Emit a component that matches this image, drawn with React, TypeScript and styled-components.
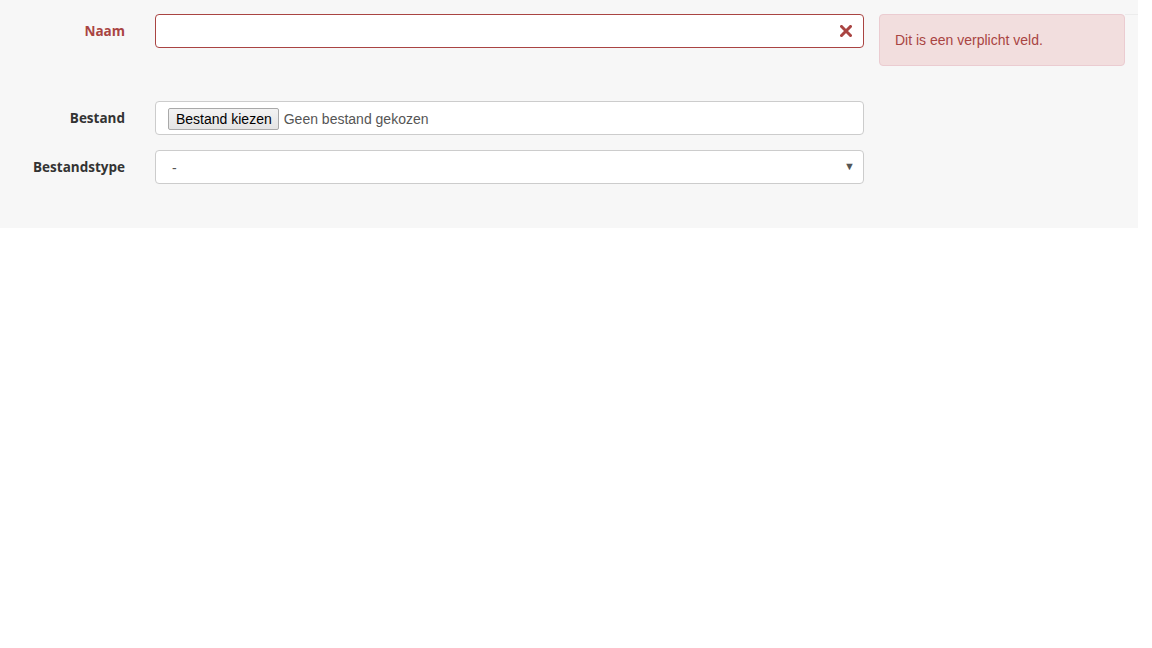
import styled, { createGlobalStyle } from "styled-components"

const GlobalStyle = createGlobalStyle`
	body {
		margin: 0;
		background: #fff;
		font-family: "Liberation Sans", Arial, sans-serif;
	}
`

const Panel = styled.div`
	width: 1138px;
	background: #f7f7f7;
	padding: 14px 0 44px;
	box-sizing: border-box;
`

const Row = styled.div<{ $gap: number }>`
	display: flex;
	align-items: flex-start;
	margin-bottom: ${(p) => p.$gap}px;
	&:last-child {
		margin-bottom: 0;
	}
`

const Label = styled.label<{ $error?: boolean }>`
	width: 125px;
	height: 34px;
	line-height: 34px;
	text-align: right;
	font-family: "Open Sans", sans-serif;
	font-weight: 700;
	font-size: 13.5px;
	color: ${(p) => (p.$error ? "#a94442" : "#333")};
	margin-right: 30px;
	flex-shrink: 0;
`

const Field = styled.div<{ $error?: boolean }>`
	position: relative;
	width: 709px;
	height: 34px;
	box-sizing: border-box;
	background: #fff;
	border: 1px solid ${(p) => (p.$error ? "#a94442" : "#ccc")};
	border-radius: 4px;
	display: flex;
	align-items: center;
	padding: 2px 12px 0;
	font-size: 14px;
	color: #555;
	flex-shrink: 0;
`

const ClearIcon = styled.svg`
	position: absolute;
	right: 11px;
	top: 10px;
`

const FileButton = styled.span`
	display: inline-block;
	height: 22px;
	line-height: 20px;
	box-sizing: border-box;
	padding: 0 6px 0 7px;
	border: 1px solid #a9a9a9;
	border-radius: 2px;
	background: linear-gradient(#f3f3f3, #e4e4e4);
	color: #000;
	font-size: 14px;
	margin-right: 5px;
`

const SelectValue = styled.span`
	padding-left: 4px;
	color: #555;
`

const Arrow = styled.span`
	position: absolute;
	right: 8px;
	top: 9px;
	font-size: 11px;
	color: #555;
`

const Alert = styled.div`
	margin-left: 15px;
	width: 246px;
	height: 52px;
	box-sizing: border-box;
	background: #f2dede;
	border: 1px solid #ebccd1;
	border-radius: 4px;
	color: #a94442;
	font-size: 14px;
	padding: 0 15px;
	display: flex;
	align-items: center;
	flex-shrink: 0;
`

const Rule = styled.div`
	flex: 1;
	border-top: 1px solid #ececec;
`

export default function App() {
	return (
		<>
			<GlobalStyle />
			<Panel>
				<Row $gap={35}>
					<Label $error>Naam</Label>
					<Field $error>
						<ClearIcon width="12" height="12" viewBox="0 0 12 12">
							<path
								d="M1.5 1.5 L10.5 10.5 M10.5 1.5 L1.5 10.5"
								stroke="#a94442"
								strokeWidth="3"
								strokeLinecap="square"
							/>
						</ClearIcon>
					</Field>
					<Alert>Dit is een verplicht veld.</Alert>
					<Rule />
				</Row>
				<Row $gap={15}>
					<Label>Bestand</Label>
					<Field>
						<FileButton>Bestand kiezen</FileButton>
						Geen bestand gekozen
					</Field>
				</Row>
				<Row $gap={0}>
					<Label>Bestandstype</Label>
					<Field>
						<SelectValue>-</SelectValue>
						<Arrow>▼</Arrow>
					</Field>
				</Row>
			</Panel>
		</>
	)
}
